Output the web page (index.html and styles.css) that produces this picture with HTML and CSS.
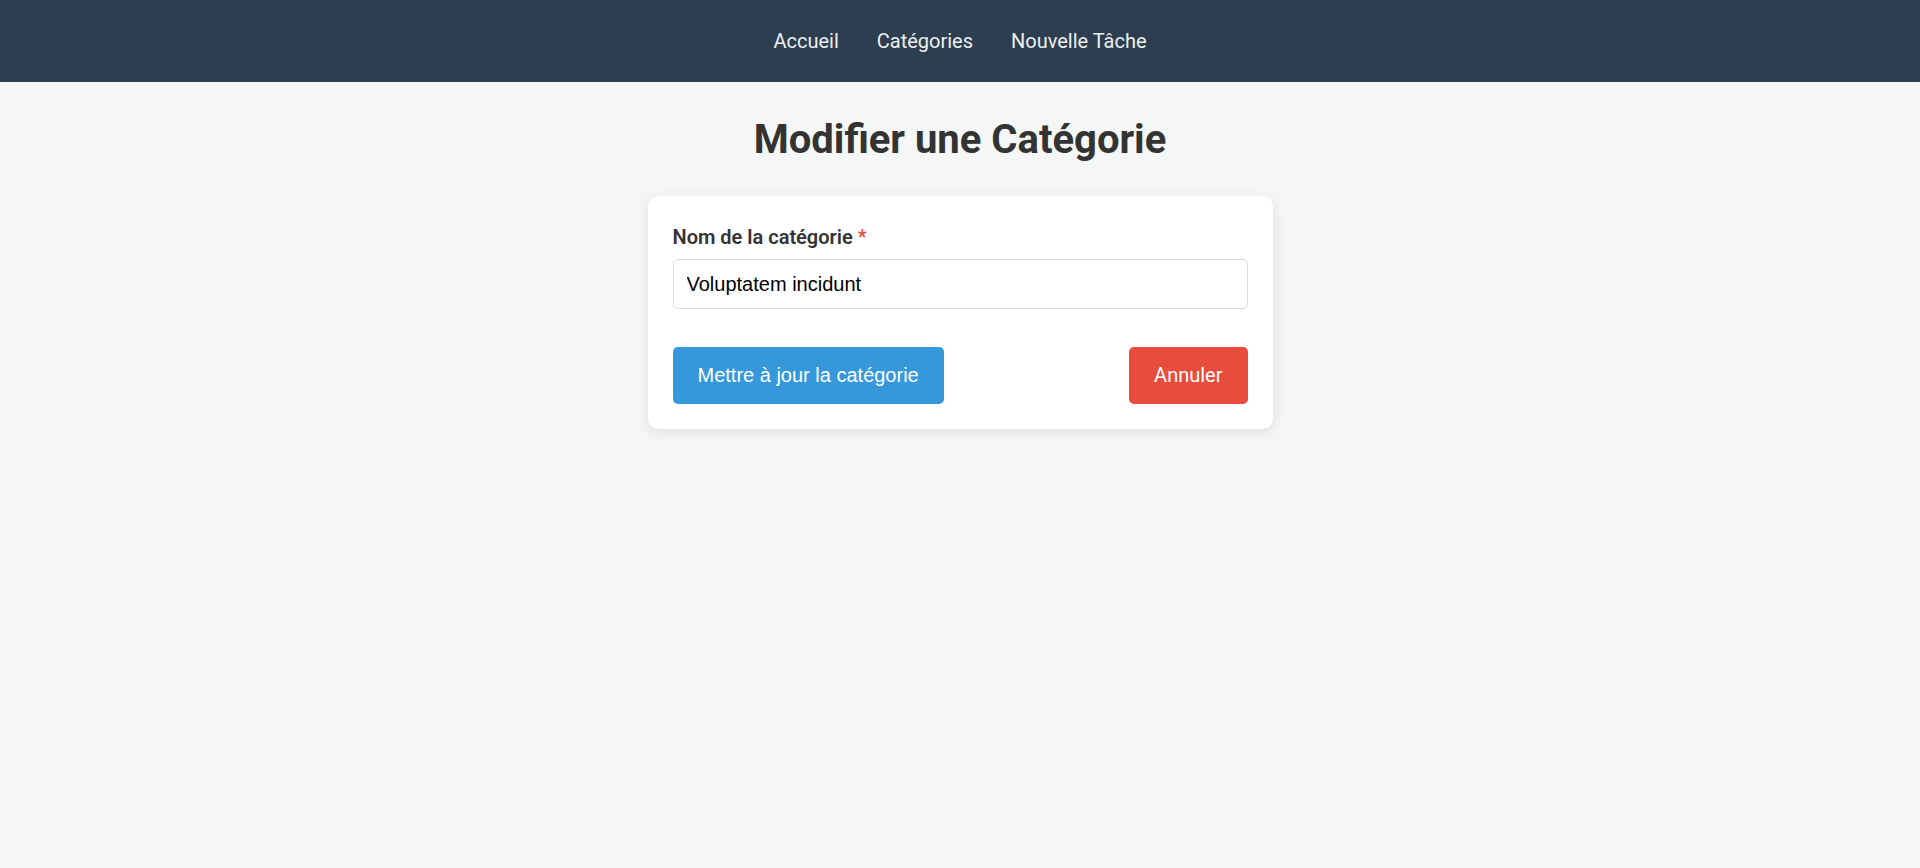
FILE: index.html
```html
<!DOCTYPE html>
<html lang="fr">
<head>
<meta charset="utf-8">
<meta name="viewport" content="width=device-width, initial-scale=1">
<title>Modifier une Catégorie</title>
<link rel="stylesheet" href="styles.css">
</head>
<body>
<nav class="navbar">
  <a class="nav-link" href="#">Accueil</a>
  <a class="nav-link" href="#">Catégories</a>
  <a class="nav-link" href="#">Nouvelle Tâche</a>
</nav>
<main class="container">
  <h1 class="title">Modifier une Catégorie</h1>
  <form class="card">
    <label class="label" for="name">Nom de la catégorie <span class="required">*</span></label>
    <input class="input" id="name" type="text" value="Voluptatem incidunt" required>
    <div class="actions">
      <button class="btn btn-primary" type="submit">Mettre à jour la catégorie</button>
      <a class="btn btn-danger" href="#">Annuler</a>
    </div>
  </form>
</main>
</body>
</html>
```
FILE: styles.css
```css
* {
  box-sizing: border-box;
}

body {
  margin: 0;
  min-height: 100vh;
  background: #f4f7f6;
  color: #333;
  font-family: Roboto, sans-serif;
  font-size: 20px;
  line-height: 32px;
}

.navbar {
  display: flex;
  justify-content: center;
  gap: 38px;
  padding: 25px;
  background: #2c3e50;
}

.nav-link {
  color: #ecf0f1;
  text-decoration: none;
}

.container {
  max-width: 625px;
  margin: 0 auto;
  padding-bottom: 25px;
}

.title {
  margin: 26px 0 24px;
  font-size: 40px;
  line-height: 64px;
  font-weight: 700;
  text-align: center;
}

.card {
  padding: 25px;
  background: #fff;
  border-radius: 10px;
  box-shadow: 0 3px 13px rgba(0, 0, 0, 0.1);
}

.label {
  display: block;
  margin-bottom: 6px;
  font-weight: 600;
}

.required {
  color: #e74c3c;
  font-weight: 500;
}

.input {
  display: block;
  width: 100%;
  height: 50px;
  padding: 12px 13px;
  border: 1px solid #ddd;
  border-radius: 5px;
  background: #fff;
  color: #000;
  font-family: "Liberation Sans", Arial, sans-serif;
  font-size: 20px;
}

.actions {
  display: flex;
  justify-content: space-between;
  margin-top: 38px;
}

.btn {
  padding: 12px 25px 13px;
  border: 0;
  border-radius: 5px;
  color: #fff;
  font-size: 20px;
  line-height: 32px;
  text-decoration: none;
  cursor: pointer;
}

.btn-primary {
  background: #3498db;
  font-family: "Liberation Sans", Arial, sans-serif;
}

.btn-danger {
  background: #e74c3c;
}
```
